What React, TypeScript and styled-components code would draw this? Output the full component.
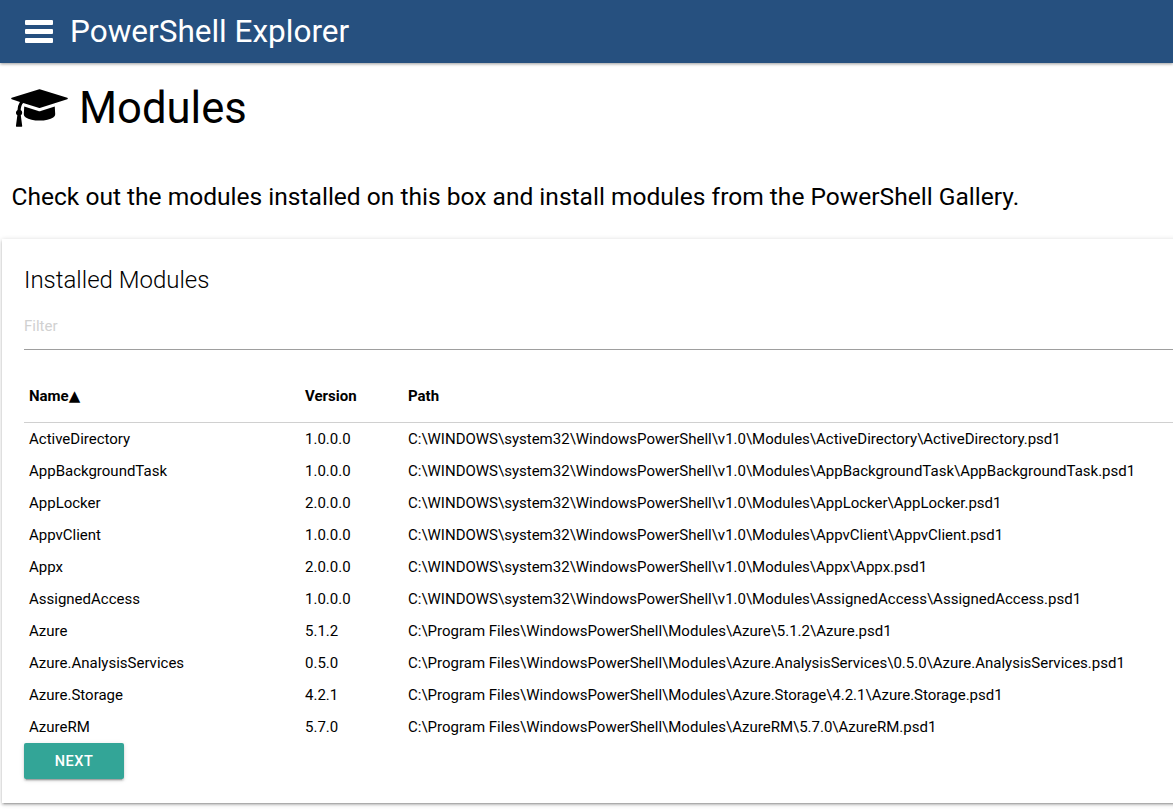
import React from 'react';
import styled, { createGlobalStyle } from 'styled-components';

const GlobalStyle = createGlobalStyle`
  html, body {
    margin: 0;
    padding: 0;
    height: 100%;
    overflow: hidden;
    background: #fff;
    color: #000;
    font-family: Roboto, "Liberation Sans", sans-serif;
  }
`;

const Page = styled.div`
  width: 1173px;
  height: 809px;
  overflow: hidden;
`;

const AppBar = styled.header`
  display: flex;
  align-items: center;
  height: 63px;
  padding-left: 25px;
  gap: 17px;
  background: #26507f;
  color: #fff;
  box-shadow: 0 1px 3px rgba(0, 0, 0, 0.4);
`;

const AppTitle = styled.div`
  font-size: 31.5px;
  line-height: 63px;
`;

const Intro = styled.section`
  padding: 0 0 0 11px;
`;

const Heading = styled.div`
  display: flex;
  align-items: center;
  gap: 11px;
  height: 90px;
`;

const HeadingText = styled.h1`
  margin: 0;
  padding-top: 2px;
  font-size: 43.6px;
  font-weight: 400;
  line-height: 90px;
`;

const Lead = styled.p`
  margin: 0;
  padding-top: 27px;
  padding-left: 0.5px;
  font-size: 24.55px;
  line-height: 34px;
  height: 59px;
`;

const Card = styled.section`
  width: 1300px;
  height: 564px;
  margin-left: 2px;
  padding: 25px 22px 0;
  box-sizing: border-box;
  box-shadow: 0 2px 2px rgba(0, 0, 0, 0.14), 0 3px 1px -2px rgba(0, 0, 0, 0.12), 0 1px 5px rgba(0, 0, 0, 0.2);
`;

const CardTitle = styled.h2`
  margin: 0;
  font-size: 24px;
  font-weight: 300;
  line-height: 32px;
`;

const FilterInput = styled.input`
  display: block;
  width: 100%;
  height: 46px;
  margin-top: 8px;
  padding: 0 0 2px;
  box-sizing: border-box;
  border: 0;
  border-bottom: 1px solid #9e9e9e;
  outline: 0;
  background: transparent;
  font-family: inherit;
  font-size: 15px;
  &::placeholder {
    color: #d1d1d1;
    opacity: 1;
  }
`;

const Table = styled.table`
  width: 100%;
  margin-top: 16px;
  border-collapse: collapse;
  table-layout: fixed;
  font-size: 15px;
`;

const HeadRow = styled.tr`
  height: 56px;
  border-bottom: 1px solid #d0d0d0;
`;

const HeadCell = styled.th`
  padding: 4px 5px 0;
  text-align: left;
  font-weight: 700;
`;

const SortArrow = styled.span`
  font-family: "DejaVu Sans", sans-serif;
  font-size: 15px;
  font-weight: 400;
`;

const BodyRow = styled.tr`
  height: 32px;
`;

const BodyCell = styled.td`
  padding: 2px 5px 0;
  white-space: nowrap;
`;

const NextButton = styled.button`
  display: block;
  width: 100px;
  height: 36px;
  margin-top: 1px;
  border: 0;
  border-radius: 2px;
  background: #33a597;
  color: #fff;
  font-family: inherit;
  font-size: 14.5px;
  font-weight: 500;
  letter-spacing: 0.5px;
  box-shadow: 0 2px 2px rgba(0, 0, 0, 0.14), 0 1px 5px rgba(0, 0, 0, 0.12), 0 3px 1px -2px rgba(0, 0, 0, 0.2);
`;

const MenuIcon = () => (
  <svg width="28" height="23" viewBox="0 0 28 23" fill="#fff">
    <rect y="0" width="28" height="5" rx="1" />
    <rect y="9" width="28" height="5" rx="1" />
    <rect y="18" width="28" height="5" rx="1" />
  </svg>
);

const CapIcon = () => (
  <svg width="57" height="44" viewBox="0 0 2304 1792" fill="#000">
    <path d="M1774 836l18 316q4 69-82 128t-235 93.5-323 34.5-323-34.5-235-93.5-82-128l18-316 574 181q22 7 48 7t48-7zm530-324q0 23-22 31l-1120 352q-4 1-10 1t-10-1l-652-206q-43 34-71 111.5t-34 178.5q63 36 63 109 0 69-58 107l58 433q2 14-8 25-9 11-24 11h-192q-15 0-24-11-10-11-8-25l58-433q-58-38-58-107 0-73 65-111 11-207 98-330l-333-104q-22-8-22-31t22-31l1120-352q4-1 10-1t10 1l1120 352q22 8 22 31z" />
  </svg>
);

const winPath = (name: string) => `C:\\WINDOWS\\system32\\WindowsPowerShell\\v1.0\\Modules\\${name}\\${name}.psd1`;
const galleryPath = (name: string, version: string) =>
  `C:\\Program Files\\WindowsPowerShell\\Modules\\${name}\\${version}\\${name}.psd1`;

const modules = [
  { name: 'ActiveDirectory', version: '1.0.0.0', path: winPath('ActiveDirectory') },
  { name: 'AppBackgroundTask', version: '1.0.0.0', path: winPath('AppBackgroundTask') },
  { name: 'AppLocker', version: '2.0.0.0', path: winPath('AppLocker') },
  { name: 'AppvClient', version: '1.0.0.0', path: winPath('AppvClient') },
  { name: 'Appx', version: '2.0.0.0', path: winPath('Appx') },
  { name: 'AssignedAccess', version: '1.0.0.0', path: winPath('AssignedAccess') },
  { name: 'Azure', version: '5.1.2', path: galleryPath('Azure', '5.1.2') },
  { name: 'Azure.AnalysisServices', version: '0.5.0', path: galleryPath('Azure.AnalysisServices', '0.5.0') },
  { name: 'Azure.Storage', version: '4.2.1', path: galleryPath('Azure.Storage', '4.2.1') },
  { name: 'AzureRM', version: '5.7.0', path: galleryPath('AzureRM', '5.7.0') },
];

const App: React.FC = () => (
  <Page>
    <GlobalStyle />
    <AppBar>
      <MenuIcon />
      <AppTitle>PowerShell Explorer</AppTitle>
    </AppBar>
    <Intro>
      <Heading>
        <CapIcon />
        <HeadingText>Modules</HeadingText>
      </Heading>
      <Lead>Check out the modules installed on this box and install modules from the PowerShell Gallery.</Lead>
    </Intro>
    <Card>
      <CardTitle>Installed Modules</CardTitle>
      <FilterInput placeholder="Filter" />
      <Table>
        <colgroup>
          <col width="276" />
          <col width="103" />
          <col />
        </colgroup>
        <thead>
          <HeadRow>
            <HeadCell>
              Name<SortArrow>▲</SortArrow>
            </HeadCell>
            <HeadCell>Version</HeadCell>
            <HeadCell>Path</HeadCell>
          </HeadRow>
        </thead>
        <tbody>
          {modules.map(({ name, version, path }) => (
            <BodyRow key={name}>
              <BodyCell>{name}</BodyCell>
              <BodyCell>{version}</BodyCell>
              <BodyCell>{path}</BodyCell>
            </BodyRow>
          ))}
        </tbody>
      </Table>
      <NextButton>NEXT</NextButton>
    </Card>
  </Page>
);

export default App;
